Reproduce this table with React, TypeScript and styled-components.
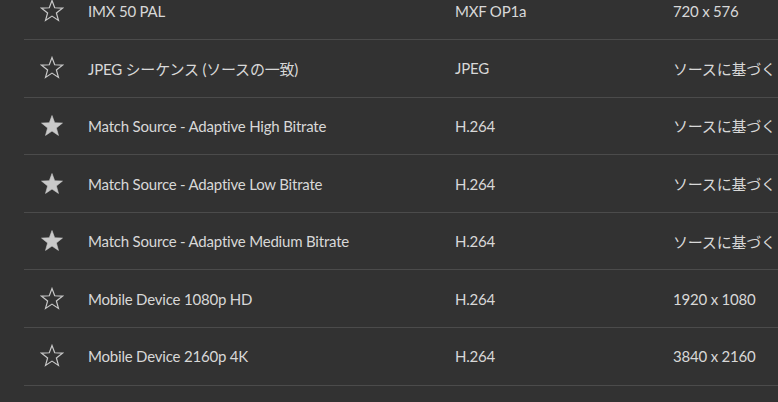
import styled, { createGlobalStyle } from "styled-components";

const GlobalStyle = createGlobalStyle`
  html, body {
    margin: 0;
    padding: 0;
    background: #323232;
    overflow: hidden;
  }
  body {
    font-family: "Lato", "Noto Sans CJK JP", sans-serif;
  }
`;

const Page = styled.div`
  width: 778px;
  height: 402px;
  overflow: hidden;
  background: #323232;
`;

// list is scrolled a little, so the first row is cut off at the top
const List = styled.ul`
  list-style: none;
  margin: -17.8px 0 0 24px;
  padding: 0;
`;

const Row = styled.li`
  display: grid;
  grid-template-columns: 56px 375px 218px 1fr;
  align-items: center;
  height: 57.67px;
  box-sizing: border-box;
  border-bottom: 1px solid #4b4b4b;
  color: #d8d8d8;
  font-size: 15px;
  white-space: nowrap;
`;

const StarCell = styled.div`
  display: flex;
  justify-content: center;
  align-items: center;
`;

const Name = styled.div`
  padding-left: 8px;
  letter-spacing: -0.2px;
`;

const Cell = styled.div`
  letter-spacing: -0.2px;
`;

const Star = ({ filled }: { filled: boolean }) => (
  <svg width="24" height="24" viewBox="0 0 24 24">
    <path
      d="M12 1.5 L14.7 8.78 L22.46 9.1 L16.38 13.92 L18.47 21.4 L12 17.1 L5.53 21.4 L7.62 13.92 L1.54 9.1 L9.3 8.78 Z"
      fill={filled ? "#c9c9c9" : "none"}
      stroke="#c9c9c9"
      strokeWidth={filled ? 0.6 : 1.2}
      strokeLinejoin="miter"
    />
  </svg>
);

type Preset = {
  name: string;
  format: string;
  size: string;
  fav: boolean;
};

const presets: Preset[] = [
  { name: "IMX 50 PAL", format: "MXF OP1a", size: "720 x 576", fav: false },
  { name: "JPEG シーケンス (ソースの一致)", format: "JPEG", size: "ソースに基づく", fav: false },
  { name: "Match Source - Adaptive High Bitrate", format: "H.264", size: "ソースに基づく", fav: true },
  { name: "Match Source - Adaptive Low Bitrate", format: "H.264", size: "ソースに基づく", fav: true },
  { name: "Match Source - Adaptive Medium Bitrate", format: "H.264", size: "ソースに基づく", fav: true },
  { name: "Mobile Device 1080p HD", format: "H.264", size: "1920 x 1080", fav: false },
  { name: "Mobile Device 2160p 4K", format: "H.264", size: "3840 x 2160", fav: false },
];

export default function App() {
  return (
    <Page>
      <GlobalStyle />
      <List>
        {presets.map((p) => (
          <Row key={p.name}>
            <StarCell>
              <Star filled={p.fav} />
            </StarCell>
            <Name>{p.name}</Name>
            <Cell>{p.format}</Cell>
            <Cell>{p.size}</Cell>
          </Row>
        ))}
      </List>
    </Page>
  );
}
